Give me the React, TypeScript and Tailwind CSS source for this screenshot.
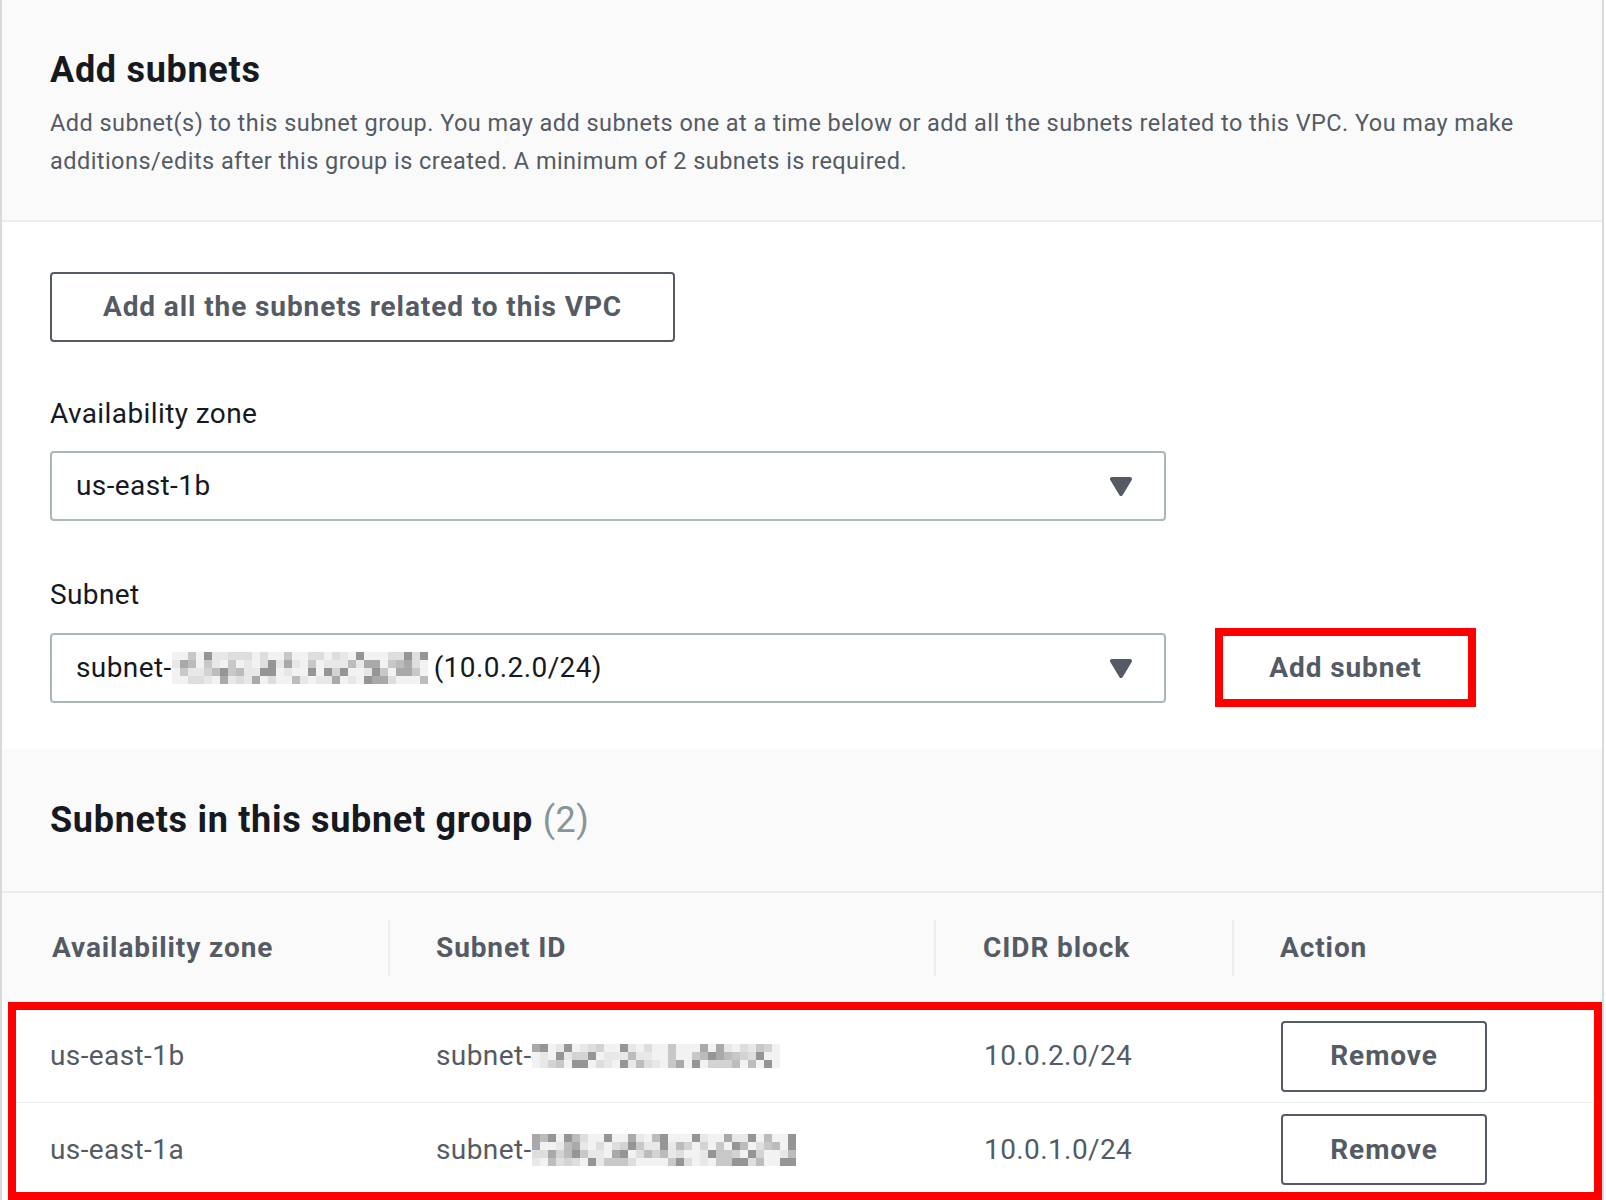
import React from 'react';

const font = { fontFamily: 'Roboto, "Liberation Sans", sans-serif' };

// pixelated redaction blocks, deterministic per seed
function Mosaic({ cols, rows, seed }: { cols: number; rows: number; seed: number }) {
  const shades = ['#f2f2f2', '#e8e8e8', '#dedede', '#d3d3d3', '#c8c8c8', '#bcbcbc', '#a9a9a9', '#959595'];
  const cells: React.ReactNode[] = [];
  let s = seed;
  for (let r = 0; r < rows; r++) {
    for (let c = 0; c < cols; c++) {
      s = (s * 9301 + 49297) % 233280;
      const v = s / 233280;
      const idx = Math.min(shades.length - 1, Math.floor(v * v * shades.length * 1.1));
      cells.push(<rect key={r + '-' + c} x={c * 8} y={r * 8} width={8} height={8} fill={shades[idx]} />);
    }
  }
  return (
    <svg width={cols * 8} height={rows * 8} className="inline-block align-middle">
      {cells}
    </svg>
  );
}

function Caret() {
  return (
    <svg width="24" height="20" viewBox="0 0 24 20">
      <path d="M3 3 H21 L12 18 Z" fill="#545b64" stroke="#545b64" strokeWidth="4" strokeLinejoin="round" />
    </svg>
  );
}

function SelectBox({ children }: { children: React.ReactNode }) {
  return (
    <div className="w-[1116px] h-[70px] border-2 border-[#aab7b8] rounded-[4px] bg-white flex items-center justify-between pl-[24px] pr-[31px]">
      <div className="text-[28px] leading-[36px] tracking-[0.4px] text-[#16191f] flex items-center whitespace-nowrap">{children}</div>
      <Caret />
    </div>
  );
}

const rows = [
  { az: 'us-east-1b', seed: 17, cols: 31, r: 3, cidr: '10.0.2.0/24' },
  { az: 'us-east-1a', seed: 91, cols: 33, r: 4, cidr: '10.0.1.0/24' },
];

export default function App() {
  return (
    <div className="w-[1606px] h-[1200px] bg-white overflow-hidden" style={font}>
      <div className="w-[1604px] h-[1200px] border-l-2 border-r-2 border-[#d5dbdb]">
        {/* header */}
        <div className="bg-[#fafafa] border-b-2 border-[#eaeded] pt-[48px] pb-[40px] px-[48px]">
          <h2 className="text-[36px] leading-[44px] font-bold tracking-[0.7px] text-[#16191f]">Add subnets</h2>
          <p className="mt-[12px] text-[23.5px] leading-[38px] tracking-[0.45px] text-[#545b64]">
            Add subnet(s) to this subnet group. You may add subnets one at a time below or add all the subnets related to this VPC. You may make additions/edits after this group is created. A minimum of 2 subnets is required.
          </p>
        </div>

        {/* form */}
        <div className="bg-white pt-[50px] pb-[42px] px-[48px]">
          <button className="w-[625px] h-[70px] border-2 border-[#545b64] rounded-[4px] bg-white text-[28px] font-bold tracking-[0.9px] text-[#545b64]">
            Add all the subnets related to this VPC
          </button>

          <div className="mt-[54px] text-[28px] leading-[36px] tracking-[0.4px] text-[#16191f]">Availability zone</div>
          <div className="mt-[19px]">
            <SelectBox>us-east-1b</SelectBox>
          </div>

          <div className="mt-[56px] text-[28px] leading-[36px] tracking-[0.4px] text-[#16191f]">Subnet</div>
          <div className="mt-[15px] flex items-center gap-[49px]">
            <SelectBox>
              <span>subnet-</span>
              <Mosaic cols={32} rows={4} seed={53} />
              <span className="ml-[6px]">(10.0.2.0/24)</span>
            </SelectBox>
            <button className="w-[261px] h-[79px] border-[8px] border-[#ff0000] bg-white text-[28px] font-bold tracking-[0.9px] text-[#545b64]">
              Add subnet
            </button>
          </div>
        </div>

        {/* subnets table */}
        <div className="bg-[#fafafa] border-b-2 border-[#eaeded] pt-[49px] pb-[49px] px-[48px]">
          <h2 className="text-[36px] leading-[44px] font-bold tracking-[0.7px] text-[#16191f]">
            Subnets in this subnet group <span className="font-normal tracking-[0.5px] text-[#879596]">(2)</span>
          </h2>
        </div>

        <div className="bg-[#fafafa] h-[109px] grid grid-cols-[388px_546px_298px_1fr] items-center text-[28px] font-bold tracking-[0.9px] text-[#545b64]">
          <div className="h-[56px] flex items-center pl-[50px] border-r-2 border-[#eaeded]">Availability zone</div>
          <div className="h-[56px] flex items-center pl-[46px] border-r-2 border-[#eaeded]">Subnet ID</div>
          <div className="h-[56px] flex items-center pl-[47px] border-r-2 border-[#eaeded]">CIDR block</div>
          <div className="h-[56px] flex items-center pl-[46px]">Action</div>
        </div>

        <div className="bg-white pl-[6px]">
          <div className="border-[8px] border-[#ff0000]">
            {rows.map((row, i) => (
              <div
                key={row.az}
                className={
                  'grid grid-cols-[374px_546px_298px_1fr] items-center text-[28px] tracking-[0.4px] text-[#545b64] ' +
                  (i === 0 ? 'h-[93px] border-b border-[#eaeded]' : 'h-[89px] pt-[4px]')
                }
              >
                <div className="pl-[34px]">{row.az}</div>
                <div className="pl-[46px] flex items-center">
                  <span>subnet-</span>
                  <Mosaic cols={row.cols} rows={row.r} seed={row.seed} />
                </div>
                <div className="pl-[48px]">{row.cidr}</div>
                <div className="pl-[47px]">
                  <button className="w-[206px] h-[71px] border-2 border-[#545b64] rounded-[4px] bg-white font-bold tracking-[0.9px] text-[#545b64]">
                    Remove
                  </button>
                </div>
              </div>
            ))}
          </div>
        </div>
      </div>
    </div>
  );
}
